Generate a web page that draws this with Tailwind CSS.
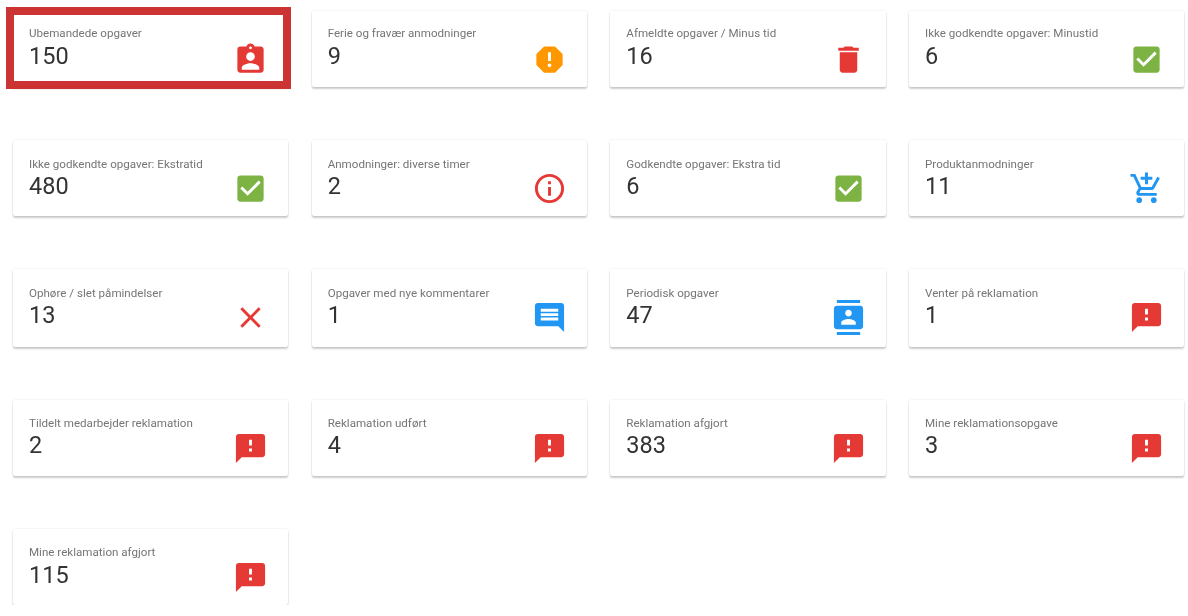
<!DOCTYPE html>
<html lang="da">
<head>
  <meta charset="UTF-8" />
  <meta name="viewport" content="width=device-width, initial-scale=1.0" />
  <title>Opgaver</title>
  <script src="https://cdn.jsdelivr.net/npm/@tailwindcss/browser@4"></script>
</head>
<body class="bg-white font-['Roboto',sans-serif] overflow-hidden">
  <svg class="hidden">
    <symbol id="i-assign" viewBox="0 0 24 24"><path d="M19 3h-4.18C14.4 1.84 13.3 1 12 1c-1.3 0-2.4.84-2.82 2H5c-1.1 0-2 .9-2 2v14c0 1.1.9 2 2 2h14c1.1 0 2-.9 2-2V5c0-1.1-.9-2-2-2zm-7 0c.55 0 1 .45 1 1s-.45 1-1 1-1-.45-1-1 .45-1 1-1zm0 4c1.66 0 3 1.34 3 3s-1.34 3-3 3-3-1.34-3-3 1.34-3 3-3zm6 12H6v-1.4c0-2 4-3.1 6-3.1s6 1.1 6 3.1V19z"/></symbol>
    <symbol id="i-report" viewBox="0 0 24 24"><path d="M15.73 3H8.27L3 8.27v7.46L8.27 21h7.46L21 15.73V8.27L15.73 3zM12 17.3c-.72 0-1.3-.58-1.3-1.3 0-.72.58-1.3 1.3-1.3.72 0 1.3.58 1.3 1.3 0 .72-.58 1.3-1.3 1.3zm1-4.3h-2V7h2v6z"/></symbol>
    <symbol id="i-delete" viewBox="0 0 24 24"><path d="M6 19c0 1.1.9 2 2 2h8c1.1 0 2-.9 2-2V7H6v12zM19 4h-3.5l-1-1h-5l-1 1H5v2h14V4z"/></symbol>
    <symbol id="i-check" viewBox="0 0 24 24"><path d="M19 3H5c-1.11 0-2 .9-2 2v14c0 1.1.89 2 2 2h14c1.11 0 2-.9 2-2V5c0-1.1-.89-2-2-2zm-9 14l-5-5 1.41-1.41L10 14.17l7.59-7.59L19 8l-9 9z"/></symbol>
    <symbol id="i-info" viewBox="0 0 24 24"><path d="M11 17h2v-6h-2v6zm1-15C6.48 2 2 6.48 2 12s4.48 10 10 10 10-4.48 10-10S17.52 2 12 2zm0 18c-4.41 0-8-3.59-8-8s3.59-8 8-8 8 3.59 8 8-3.59 8-8 8zM11 9h2V7h-2v2z"/></symbol>
    <symbol id="i-cart" viewBox="0 0 24 24"><path d="M11 9h2V6h3V4h-3V1h-2v3H8v2h3v3zm-4 9c-1.1 0-1.99.9-1.99 2S5.9 22 7 22s2-.9 2-2-.9-2-2-2zm10 0c-1.1 0-1.99.9-1.99 2s.89 2 1.99 2 2-.9 2-2-.9-2-2-2zm-9.83-3.25l.03-.12.9-1.63h7.45c.75 0 1.41-.41 1.75-1.03l3.86-7.01L19.42 4h-.01l-1.1 2-2.76 5H8.53l-.13-.27L6.16 6l-.95-2-.94-2H1v2h2l3.6 7.59-1.35 2.45c-.16.28-.25.61-.25.96 0 1.1.9 2 2 2h12v-2H7.42c-.13 0-.25-.11-.25-.25z"/></symbol>
    <symbol id="i-close" viewBox="0 0 24 24"><path d="M19 6.41L17.59 5 12 10.59 6.41 5 5 6.41 10.59 12 5 17.59 6.41 19 12 13.41 17.59 19 19 17.59 13.41 12z"/></symbol>
    <symbol id="i-message" viewBox="0 0 24 24"><path transform="matrix(-1 0 0 1 24 0)" d="M20 2H4c-1.1 0-1.99.9-1.99 2L2 22l4-4h14c1.1 0 2-.9 2-2V4c0-1.1-.9-2-2-2zm-2 12H6v-2h12v2zm0-3H6V9h12v2zm0-3H6V6h12v2z"/></symbol>
    <symbol id="i-contacts" viewBox="0 0 24 24"><path d="M20 0H4v2h16V0zM4 24h16v-2H4v2zM20 4H4c-1.1 0-2 .9-2 2v12c0 1.1.9 2 2 2h16c1.1 0 2-.9 2-2V6c0-1.1-.9-2-2-2zm-8 2.75c1.24 0 2.25 1.01 2.25 2.25s-1.01 2.25-2.25 2.25S9.75 10.24 9.75 9 10.76 6.75 12 6.75zM17 17H7v-1.5c0-1.67 3.33-2.5 5-2.5s5 .83 5 2.5V17z"/></symbol>
    <symbol id="i-feedback" viewBox="0 0 24 24"><path d="M20 2H4c-1.1 0-1.99.9-1.99 2L2 22l4-4h14c1.1 0 2-.9 2-2V4c0-1.1-.9-2-2-2zm-7 12h-2v-2h2v2zm0-4h-2V6h2v4z"/></symbol>
  </svg>

  <main class="grid grid-cols-4 grid-rows-[76px_76px_78px_76px_76px] gap-x-[23.33px] gap-y-[53px] pt-[11px] pl-[13px] pr-[3.67px] blur-[0.3px]">
    <div class="relative flex justify-between bg-white rounded-[2px] shadow-[0_2px_2px_rgba(0,0,0,0.2),0_0_2px_rgba(0,0,0,0.12)] pl-4 pr-5">
      <div class="pt-[15px]"><p class="text-[11.6px] leading-[14px] text-[#757575]">Ubemandede opgaver</p><p class="text-[23.5px] leading-[28px] mt-[2px] text-[#333]">150</p></div>
      <svg class="w-[35px] h-[35px] mt-[31px] fill-[#e53935]"><use href="#i-assign"/></svg>
      <div class="absolute -left-[7px] -top-[4px] w-[285px] h-[82px] border-8 border-[#cc3333]"></div>
    </div>
    <div class="flex justify-between bg-white rounded-[2px] shadow-[0_2px_2px_rgba(0,0,0,0.2),0_0_2px_rgba(0,0,0,0.12)] pl-4 pr-5">
      <div class="pt-[15px]"><p class="text-[11.6px] leading-[14px] text-[#757575]">Ferie og fravær anmodninger</p><p class="text-[23.5px] leading-[28px] mt-[2px] text-[#333]">9</p></div>
      <svg class="w-[35px] h-[35px] mt-[31px] fill-[#ff9800]"><use href="#i-report"/></svg>
    </div>
    <div class="flex justify-between bg-white rounded-[2px] shadow-[0_2px_2px_rgba(0,0,0,0.2),0_0_2px_rgba(0,0,0,0.12)] pl-4 pr-5">
      <div class="pt-[15px]"><p class="text-[11.6px] leading-[14px] text-[#757575]">Afmeldte opgaver / Minus tid</p><p class="text-[23.5px] leading-[28px] mt-[2px] text-[#333]">16</p></div>
      <svg class="w-[35px] h-[35px] mt-[31px] fill-[#e53935]"><use href="#i-delete"/></svg>
    </div>
    <div class="flex justify-between bg-white rounded-[2px] shadow-[0_2px_2px_rgba(0,0,0,0.2),0_0_2px_rgba(0,0,0,0.12)] pl-4 pr-5">
      <div class="pt-[15px]"><p class="text-[11.6px] leading-[14px] text-[#757575]">Ikke godkendte opgaver: Minustid</p><p class="text-[23.5px] leading-[28px] mt-[2px] text-[#333]">6</p></div>
      <svg class="w-[35px] h-[35px] mt-[31px] fill-[#7cb342]"><use href="#i-check"/></svg>
    </div>

    <div class="flex justify-between bg-white rounded-[2px] shadow-[0_2px_2px_rgba(0,0,0,0.2),0_0_2px_rgba(0,0,0,0.12)] pl-4 pr-5">
      <div class="pt-[17px]"><p class="text-[11.6px] leading-[14px] text-[#757575]">Ikke godkendte opgaver: Ekstratid</p><p class="text-[23.5px] leading-[28px] mt-px text-[#333]">480</p></div>
      <svg class="w-[35px] h-[35px] mt-[31px] fill-[#7cb342]"><use href="#i-check"/></svg>
    </div>
    <div class="flex justify-between bg-white rounded-[2px] shadow-[0_2px_2px_rgba(0,0,0,0.2),0_0_2px_rgba(0,0,0,0.12)] pl-4 pr-5">
      <div class="pt-[17px]"><p class="text-[11.6px] leading-[14px] text-[#757575]">Anmodninger: diverse timer</p><p class="text-[23.5px] leading-[28px] mt-px text-[#333]">2</p></div>
      <svg class="w-[35px] h-[35px] mt-[31px] fill-[#e53935]"><use href="#i-info"/></svg>
    </div>
    <div class="flex justify-between bg-white rounded-[2px] shadow-[0_2px_2px_rgba(0,0,0,0.2),0_0_2px_rgba(0,0,0,0.12)] pl-4 pr-5">
      <div class="pt-[17px]"><p class="text-[11.6px] leading-[14px] text-[#757575]">Godkendte opgaver: Ekstra tid</p><p class="text-[23.5px] leading-[28px] mt-px text-[#333]">6</p></div>
      <svg class="w-[35px] h-[35px] mt-[31px] fill-[#7cb342]"><use href="#i-check"/></svg>
    </div>
    <div class="flex justify-between bg-white rounded-[2px] shadow-[0_2px_2px_rgba(0,0,0,0.2),0_0_2px_rgba(0,0,0,0.12)] pl-4 pr-5">
      <div class="pt-[17px]"><p class="text-[11.6px] leading-[14px] text-[#757575]">Produktanmodninger</p><p class="text-[23.5px] leading-[28px] mt-px text-[#333]">11</p></div>
      <svg class="w-[35px] h-[35px] mt-[31px] fill-[#2196f3]"><use href="#i-cart"/></svg>
    </div>

    <div class="flex justify-between bg-white rounded-[2px] shadow-[0_2px_2px_rgba(0,0,0,0.2),0_0_2px_rgba(0,0,0,0.12)] pl-4 pr-5">
      <div class="pt-[17px]"><p class="text-[11.6px] leading-[14px] text-[#757575]">Ophøre / slet påmindelser</p><p class="text-[23.5px] leading-[28px] mt-px text-[#333]">13</p></div>
      <svg class="w-[35px] h-[35px] mt-[31px] fill-[#e53935]"><use href="#i-close"/></svg>
    </div>
    <div class="flex justify-between bg-white rounded-[2px] shadow-[0_2px_2px_rgba(0,0,0,0.2),0_0_2px_rgba(0,0,0,0.12)] pl-4 pr-5">
      <div class="pt-[17px]"><p class="text-[11.6px] leading-[14px] text-[#757575]">Opgaver med nye kommentarer</p><p class="text-[23.5px] leading-[28px] mt-px text-[#333]">1</p></div>
      <svg class="w-[35px] h-[35px] mt-[31px] fill-[#2196f3]"><use href="#i-message"/></svg>
    </div>
    <div class="flex justify-between bg-white rounded-[2px] shadow-[0_2px_2px_rgba(0,0,0,0.2),0_0_2px_rgba(0,0,0,0.12)] pl-4 pr-5">
      <div class="pt-[17px]"><p class="text-[11.6px] leading-[14px] text-[#757575]">Periodisk opgaver</p><p class="text-[23.5px] leading-[28px] mt-px text-[#333]">47</p></div>
      <svg class="w-[35px] h-[35px] mt-[31px] fill-[#2196f3]"><use href="#i-contacts"/></svg>
    </div>
    <div class="flex justify-between bg-white rounded-[2px] shadow-[0_2px_2px_rgba(0,0,0,0.2),0_0_2px_rgba(0,0,0,0.12)] pl-4 pr-5">
      <div class="pt-[17px]"><p class="text-[11.6px] leading-[14px] text-[#757575]">Venter på reklamation</p><p class="text-[23.5px] leading-[28px] mt-px text-[#333]">1</p></div>
      <svg class="w-[35px] h-[35px] mt-[31px] fill-[#e53935]"><use href="#i-feedback"/></svg>
    </div>

    <div class="flex justify-between bg-white rounded-[2px] shadow-[0_2px_2px_rgba(0,0,0,0.2),0_0_2px_rgba(0,0,0,0.12)] pl-4 pr-5">
      <div class="pt-4"><p class="text-[11.6px] leading-[14px] text-[#757575]">Tildelt medarbejder reklamation</p><p class="text-[23.5px] leading-[28px] mt-px text-[#333]">2</p></div>
      <svg class="w-[35px] h-[35px] mt-[31px] fill-[#e53935]"><use href="#i-feedback"/></svg>
    </div>
    <div class="flex justify-between bg-white rounded-[2px] shadow-[0_2px_2px_rgba(0,0,0,0.2),0_0_2px_rgba(0,0,0,0.12)] pl-4 pr-5">
      <div class="pt-4"><p class="text-[11.6px] leading-[14px] text-[#757575]">Reklamation udført</p><p class="text-[23.5px] leading-[28px] mt-px text-[#333]">4</p></div>
      <svg class="w-[35px] h-[35px] mt-[31px] fill-[#e53935]"><use href="#i-feedback"/></svg>
    </div>
    <div class="flex justify-between bg-white rounded-[2px] shadow-[0_2px_2px_rgba(0,0,0,0.2),0_0_2px_rgba(0,0,0,0.12)] pl-4 pr-5">
      <div class="pt-4"><p class="text-[11.6px] leading-[14px] text-[#757575]">Reklamation afgjort</p><p class="text-[23.5px] leading-[28px] mt-px text-[#333]">383</p></div>
      <svg class="w-[35px] h-[35px] mt-[31px] fill-[#e53935]"><use href="#i-feedback"/></svg>
    </div>
    <div class="flex justify-between bg-white rounded-[2px] shadow-[0_2px_2px_rgba(0,0,0,0.2),0_0_2px_rgba(0,0,0,0.12)] pl-4 pr-5">
      <div class="pt-4"><p class="text-[11.6px] leading-[14px] text-[#757575]">Mine reklamationsopgave</p><p class="text-[23.5px] leading-[28px] mt-px text-[#333]">3</p></div>
      <svg class="w-[35px] h-[35px] mt-[31px] fill-[#e53935]"><use href="#i-feedback"/></svg>
    </div>

    <div class="flex justify-between bg-white rounded-[2px] shadow-[0_2px_2px_rgba(0,0,0,0.2),0_0_2px_rgba(0,0,0,0.12)] pl-4 pr-5">
      <div class="pt-4"><p class="text-[11.6px] leading-[14px] text-[#757575]">Mine reklamation afgjort</p><p class="text-[23.5px] leading-[28px] mt-[2px] text-[#333]">115</p></div>
      <svg class="w-[35px] h-[35px] mt-[31px] fill-[#e53935]"><use href="#i-feedback"/></svg>
    </div>
  </main>
</body>
</html>
